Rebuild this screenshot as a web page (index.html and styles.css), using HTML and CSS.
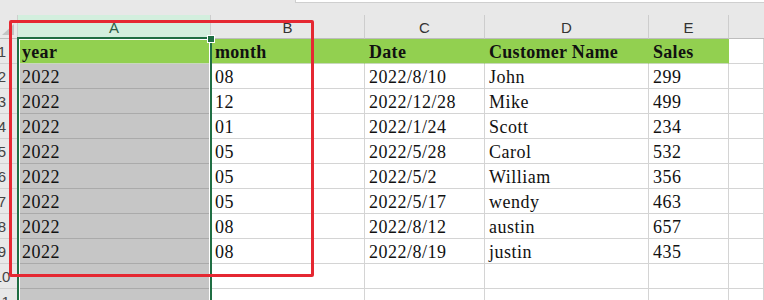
FILE: index.html
```html
<!DOCTYPE html>
<html>
<head>
<meta charset="utf-8">
<link rel="stylesheet" href="styles.css">
</head>
<body>
<div class="app">
  <div class="topbar"><div class="fx"></div></div>
  <div class="sheet">
    <div class="corner"><span class="tri"></span></div>
    <div class="colhead sel">A</div>
    <div class="colhead">B</div>
    <div class="colhead">C</div>
    <div class="colhead">D</div>
    <div class="colhead">E</div>
    <div class="colhead last"></div>

    <div class="rowhead">1</div>
    <div class="cell hdr">year</div>
    <div class="cell hdr">month</div>
    <div class="cell hdr">Date</div>
    <div class="cell hdr">Customer Name</div>
    <div class="cell hdr">Sales</div>
    <div class="cell"></div>

    <div class="rowhead">2</div>
    <div class="cell a">2022</div><div class="cell">08</div><div class="cell">2022/8/10</div><div class="cell">John</div><div class="cell">299</div><div class="cell"></div>
    <div class="rowhead">3</div>
    <div class="cell a">2022</div><div class="cell">12</div><div class="cell">2022/12/28</div><div class="cell">Mike</div><div class="cell">499</div><div class="cell"></div>
    <div class="rowhead">4</div>
    <div class="cell a">2022</div><div class="cell">01</div><div class="cell">2022/1/24</div><div class="cell">Scott</div><div class="cell">234</div><div class="cell"></div>
    <div class="rowhead">5</div>
    <div class="cell a">2022</div><div class="cell">05</div><div class="cell">2022/5/28</div><div class="cell">Carol</div><div class="cell">532</div><div class="cell"></div>
    <div class="rowhead">6</div>
    <div class="cell a">2022</div><div class="cell">05</div><div class="cell">2022/5/2</div><div class="cell">William</div><div class="cell">356</div><div class="cell"></div>
    <div class="rowhead">7</div>
    <div class="cell a">2022</div><div class="cell">05</div><div class="cell">2022/5/17</div><div class="cell">wendy</div><div class="cell">463</div><div class="cell"></div>
    <div class="rowhead">8</div>
    <div class="cell a">2022</div><div class="cell">08</div><div class="cell">2022/8/12</div><div class="cell">austin</div><div class="cell">657</div><div class="cell"></div>
    <div class="rowhead">9</div>
    <div class="cell a">2022</div><div class="cell">08</div><div class="cell">2022/8/19</div><div class="cell">justin</div><div class="cell">435</div><div class="cell"></div>
    <div class="rowhead">10</div>
    <div class="cell a"></div><div class="cell"></div><div class="cell"></div><div class="cell"></div><div class="cell"></div><div class="cell"></div>
    <div class="rowhead">11</div>
    <div class="cell a"></div><div class="cell"></div><div class="cell"></div><div class="cell"></div><div class="cell"></div><div class="cell"></div>
  </div>
  <div class="selection"><span class="handle"></span></div>
  <div class="annotation"></div>
</div>
</body>
</html>
```
FILE: styles.css
```css
html, body {
  margin: 0;
  padding: 0;
  overflow: hidden;
  background: #ffffff;
}
.app {
  position: relative;
  width: 764px;
  height: 300px;
  overflow: hidden;
}
.topbar {
  height: 15px;
  background: #e8e8e8;
  display: flex;
}
.fx {
  margin-left: 295px;
  flex: 1;
  height: 2px;
  background: #ffffff;
  border-left: 1px solid #cfcfcf;
  border-bottom: 1px solid #cfcfcf;
}
.sheet {
  display: grid;
  grid-template-columns: 32px 193px 154px 120px 164px 80px 1fr;
  grid-template-rows: 24px repeat(11, 25px);
  margin-left: -14px;
  width: 778px;
}
.corner {
  background: #e8e8e8;
  border-right: 1px solid #cfcfcf;
  border-bottom: 1px solid #bdbdbd;
  box-sizing: border-box;
  display: flex;
  align-items: flex-end;
  justify-content: flex-end;
  padding: 0 3px 3px 0;
}
.tri {
  width: 0;
  height: 0;
  border-left: 12px solid transparent;
  border-bottom: 11px solid #c3c3c3;
}
.colhead {
  background: #e8e8e8;
  border-right: 1px solid #cdcdcd;
  border-bottom: 1px solid #bdbdbd;
  box-sizing: border-box;
  font-family: "Liberation Sans", "Noto Sans", sans-serif;
  font-size: 15px;
  color: #333333;
  display: flex;
  align-items: center;
  justify-content: center;
  padding-top: 2px;
}
.colhead.sel {
  background: #d3efde;
  color: #2e5e44;
}
.colhead.last {
  border-right: none;
}
.rowhead {
  background: #e8e8e8;
  border-bottom: 1px solid #d0d0d0;
  box-sizing: border-box;
  font-family: "Liberation Sans", "Noto Sans", sans-serif;
  font-size: 15px;
  color: #444444;
  display: flex;
  align-items: center;
  justify-content: center;
}
.cell {
  border-right: 1px solid #d4d4d4;
  border-bottom: 1px solid #d4d4d4;
  box-sizing: border-box;
  font-family: "Liberation Serif", "Noto Serif", serif;
  font-size: 18px;
  letter-spacing: 0.5px;
  color: #111111;
  padding: 2px 4px 0 4px;
  line-height: 22px;
  white-space: nowrap;
  overflow: hidden;
}
.cell.hdr {
  background: #92d050;
  font-weight: bold;
  letter-spacing: 0.3px;
  border-bottom-color: #c8d8bc;
  border-right-color: #92d050;
}
.cell.a {
  background: #c6c6c6;
  border-bottom-color: #aaaaaa;
}
.selection {
  position: absolute;
  left: 17px;
  top: 37px;
  width: 191px;
  height: 280px;
  border: 2px solid #1f6e43;
  border-bottom: none;
  box-shadow: inset 1px 1px 0 #ffffff, inset -1px 0 0 #ffffff;
}
.handle {
  position: absolute;
  right: -5px;
  top: -4px;
  width: 6px;
  height: 6px;
  background: #1f6e43;
  border: 1px solid #ffffff;
}
.annotation {
  position: absolute;
  left: 9px;
  top: 20px;
  width: 299px;
  height: 251px;
  border: 3px solid #e52832;
  border-radius: 2px;
}
```
